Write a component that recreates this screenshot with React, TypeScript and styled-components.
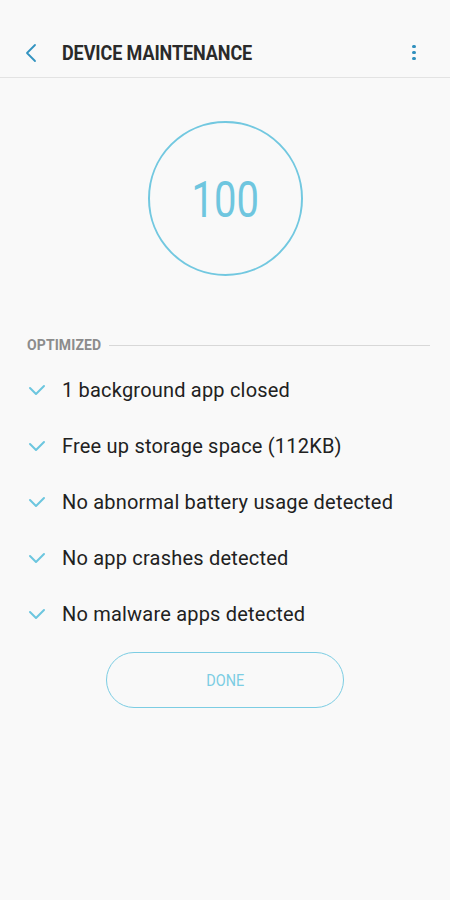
import React from "react";
import styled, { createGlobalStyle } from "styled-components";

const Global = createGlobalStyle`
  html, body { margin: 0; padding: 0; background: #f9f9f9; }
  body { font-family: Roboto, "Noto Sans", sans-serif; -webkit-font-smoothing: antialiased; }
`;

const Screen = styled.div`
  width: 450px;
  height: 900px;
  background: #f9f9f9;
  display: flex;
  flex-direction: column;
`;

const Header = styled.header`
  height: 78px;
  box-sizing: border-box;
  border-bottom: 1px solid #e3e3e3;
  display: flex;
  align-items: center;
  padding: 28px 33px 0 20px;
`;

const BackButton = styled.div`
  width: 22px;
  height: 22px;
  display: flex;
  align-items: center;
  justify-content: center;
  margin-right: 20px;
`;

const Title = styled.h1`
  flex: 1;
  margin: 0;
  font-family: Roboto, sans-serif;
  font-weight: 700;
  font-size: 20px;
  letter-spacing: -0.1px;
  color: #2a2a2a;
  transform: scaleX(0.9);
  transform-origin: left center;
`;

const Menu = styled.div`
  width: 6px;
  display: flex;
  flex-direction: column;
  align-items: center;
  gap: 2.5px;
`;

const Dot = styled.span`
  width: 3.5px;
  height: 3.5px;
  border-radius: 50%;
  background: #2f8fbd;
`;

const ScoreWrap = styled.div`
  display: flex;
  justify-content: center;
  padding-top: 43px;
`;

const Ring = styled.div`
  width: 155px;
  height: 155px;
  box-sizing: border-box;
  border: 2px solid #72c8e0;
  border-radius: 50%;
  display: flex;
  align-items: center;
  justify-content: center;
  padding-top: 3px;
`;

const Score = styled.span`
  font-family: Roboto, sans-serif;
  font-weight: 400;
  font-size: 50px;
  color: #6fc6df;
  transform: scaleX(0.8);
  line-height: 1;
`;

const Section = styled.div`
  display: flex;
  align-items: center;
  padding: 0 20px 0 27px;
  margin-top: 61px;
  gap: 8px;
`;

const SectionLabel = styled.span`
  font-family: Roboto, sans-serif;
  font-weight: 700;
  font-size: 14px;
  color: #8c8c8c;
  letter-spacing: 0.1px;
`;

const Rule = styled.div`
  flex: 1;
  height: 1px;
  background: #d8d8d8;
`;

const List = styled.ul`
  list-style: none;
  margin: 9px 0 0;
  padding: 0;
`;

const Item = styled.li`
  height: 56px;
  display: flex;
  align-items: center;
  padding-left: 28px;
`;

const Check = styled.svg`
  width: 18px;
  height: 12px;
  margin-right: 16px;
`;

const ItemText = styled.span`
  font-family: Roboto, sans-serif;
  font-size: 20px;
  letter-spacing: 0.2px;
  color: #212121;
`;

const ButtonRow = styled.div`
  display: flex;
  justify-content: center;
  margin-top: 10px;
`;

const DoneButton = styled.button`
  width: 238px;
  height: 56px;
  box-sizing: border-box;
  border: 1.5px solid #7ccde3;
  border-radius: 28px;
  background: transparent;
  padding: 0;
  display: flex;
  align-items: center;
  justify-content: center;
`;

const DoneLabel = styled.span`
  font-family: Roboto, sans-serif;
  font-size: 17px;
  color: #7ccde3;
  transform: scaleX(0.85);
`;

const items = [
  "1 background app closed",
  "Free up storage space (112KB)",
  "No abnormal battery usage detected",
  "No app crashes detected",
  "No malware apps detected",
];

export default function App() {
  return (
    <Screen>
      <Global />
      <Header>
        <BackButton>
          <svg width="12" height="20" viewBox="0 0 12 20">
            <path d="M10 2 L2 10 L10 18" fill="none" stroke="#3293c0" strokeWidth="1.8" strokeLinecap="round" strokeLinejoin="round" />
          </svg>
        </BackButton>
        <Title>DEVICE MAINTENANCE</Title>
        <Menu>
          <Dot />
          <Dot />
          <Dot />
        </Menu>
      </Header>
      <ScoreWrap>
        <Ring>
          <Score>100</Score>
        </Ring>
      </ScoreWrap>
      <Section>
        <SectionLabel>OPTIMIZED</SectionLabel>
        <Rule />
      </Section>
      <List>
        {items.map((t) => (
          <Item key={t}>
            <Check viewBox="0 0 18 12">
              <path d="M2 4 L8 10 L16 2" fill="none" stroke="#6cc6df" strokeWidth="2" strokeLinecap="round" strokeLinejoin="round" />
            </Check>
            <ItemText>{t}</ItemText>
          </Item>
        ))}
      </List>
      <ButtonRow>
        <DoneButton>
          <DoneLabel>DONE</DoneLabel>
        </DoneButton>
      </ButtonRow>
    </Screen>
  );
}
